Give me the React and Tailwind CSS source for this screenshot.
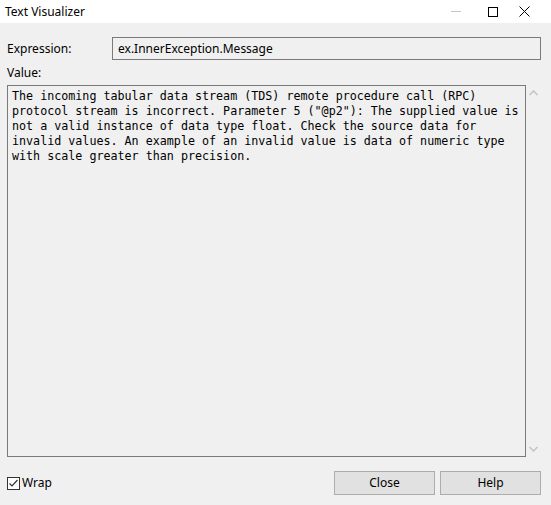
import React from "react";

const ui = { fontFamily: '"Noto Sans", "Open Sans", sans-serif' };
const mono = { fontFamily: '"DejaVu Sans Mono", "Liberation Mono", monospace' };

const lines = [
  "The incoming tabular data stream (TDS) remote procedure call (RPC)",
  'protocol stream is incorrect. Parameter 5 ("@p2"): The supplied value is',
  "not a valid instance of data type float. Check the source data for",
  "invalid values. An example of an invalid value is data of numeric type",
  "with scale greater than precision.",
];

export default function App() {
  return (
    <div className="w-[551px] h-[505px] bg-[#f0f0f0] flex flex-col text-[12px] text-black overflow-hidden" style={ui}>
      {/* title bar */}
      <div className="h-[23px] bg-white flex items-center shrink-0">
        <span className="pl-[5px] flex-1 leading-none">Text Visualizer</span>
        <div className="w-[28px] flex justify-center">
          <div className="w-[10px] h-px bg-[#c6c6c6]" />
        </div>
        <div className="w-[45px] flex justify-center">
          <div className="w-[10px] h-[10px] border border-black" />
        </div>
        <div className="w-[36px] flex justify-start pl-[4px]">
          <svg width="11" height="11" viewBox="0 0 11 11">
            <path d="M0.5 0.5 L10.5 10.5 M10.5 0.5 L0.5 10.5" stroke="#000" strokeWidth="1" />
          </svg>
        </div>
      </div>

      <div className="flex flex-col px-[7px] pr-[10px]">
        <div className="flex items-center mt-[14px] h-[23px]">
          <span className="w-[105px]">Expression:</span>
          <div className="flex-1 h-[23px] border border-[#7a7a7a] flex items-center pl-[5px] leading-none">
            ex.InnerException.Message
          </div>
        </div>
        <div className="mt-[5px] leading-[16px]">Value:</div>
        <div className="flex mt-[4px]">
          <div className="w-[519px] h-[372px] border border-[#7a7a7a] bg-[#f0f0f0] pl-[4px] pt-[3px] text-[11.7px] leading-[15px] whitespace-pre" style={mono}>
            {lines.map((l, i) => (
              <div key={i}>{l}</div>
            ))}
          </div>
          <div className="flex-1 flex flex-col items-center justify-between py-[5px]">
            <svg width="9" height="6" viewBox="0 0 9 6">
              <path d="M0.5 5 L4.5 1 L8.5 5" stroke="#c2c2c2" strokeWidth="1.5" fill="none" />
            </svg>
            <svg width="9" height="6" viewBox="0 0 9 6">
              <path d="M0.5 1 L4.5 5 L8.5 1" stroke="#c2c2c2" strokeWidth="1.5" fill="none" />
            </svg>
          </div>
        </div>

        <div className="flex items-center mt-[14px]">
          <div className="flex items-center gap-[2px] flex-1">
            <div className="w-[13px] h-[13px] border border-[#333] bg-white flex items-center justify-center">
              <svg width="11" height="11" viewBox="0 0 11 11">
                <path d="M1.5 5.5 L4 8 L9.5 2" stroke="#333" strokeWidth="1.2" fill="none" />
              </svg>
            </div>
            <span>Wrap</span>
          </div>
          <button className="w-[101px] h-[24px] bg-[#e1e1e1] border border-[#adadad] leading-none">Close</button>
          <button className="w-[101px] h-[24px] bg-[#e1e1e1] border border-[#adadad] leading-none ml-[5px]">Help</button>
        </div>
      </div>
    </div>
  );
}
